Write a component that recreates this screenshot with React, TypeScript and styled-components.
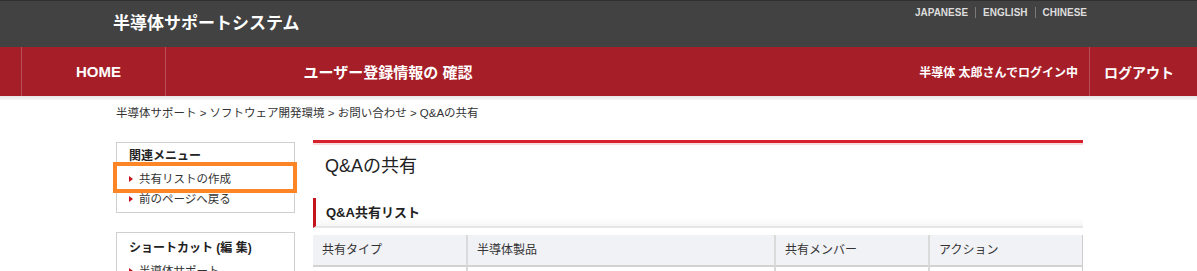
import React from "react";
import styled, { createGlobalStyle } from "styled-components";

const GlobalStyle = createGlobalStyle`
  html, body {
    margin: 0;
    padding: 0;
    overflow: hidden;
    background: #ffffff;
    font-family: "Liberation Sans", "Noto Sans CJK JP", Arial, sans-serif;
    color: #333333;
  }
  * { box-sizing: border-box; }
`;

const TopBar = styled.header`
  height: 47px;
  background: #424242;
  border-top: 1px solid #303030;
  display: flex;
  justify-content: space-between;
  align-items: flex-start;
  padding: 0 110px 0 113px;
`;

const SiteTitle = styled.div`
  font-size: 17px;
  font-weight: bold;
  color: #ffffff;
  line-height: 45px;
`;

const LangList = styled.nav`
  display: flex;
  margin-top: 6px;
`;

const LangLink = styled.a<{ $first?: boolean; $last?: boolean }>`
  font-size: 10px;
  font-weight: bold;
  color: #dddddd;
  line-height: 11px;
  padding: 0 ${(p) => (p.$last ? "0" : "7px")} 0 ${(p) => (p.$first ? "0" : "7px")};
  border-left: ${(p) => (p.$first ? "none" : "1px solid #7a7a7a")};
  text-decoration: none;
`;

const NavBar = styled.nav`
  height: 49px;
  background: #a61e27;
  display: flex;
  align-items: stretch;
  padding-left: 21px;
`;

const NavItem = styled.a<{ $width: number; $shift?: number; $left?: boolean; $right?: boolean }>`
  width: ${(p) => p.$width}px;
  display: flex;
  align-items: center;
  justify-content: center;
  padding-left: ${(p) => p.$shift ?? 0}px;
  color: #ffffff;
  font-size: 15px;
  font-weight: bold;
  text-decoration: none;
  border-left: ${(p) => (p.$left ? "1px solid rgba(255,255,255,0.22)" : "none")};
  border-right: ${(p) => (p.$right ? "1px solid rgba(255,255,255,0.22)" : "none")};
`;

const NavSpacer = styled.div`
  flex: 1;
`;

const LoginInfo = styled.div`
  display: flex;
  align-items: center;
  color: #ffffff;
  font-size: 12px;
  font-weight: bold;
  padding-right: 11px;
`;

const LogoutItem = styled.a`
  display: flex;
  align-items: center;
  color: #ffffff;
  font-size: 14px;
  font-weight: bold;
  padding: 0 23px 0 14px;
  border-left: 1px solid rgba(255,255,255,0.22);
  text-decoration: none;
`;

const NavShadow = styled.div`
  height: 4px;
  background: linear-gradient(#e6e6e6, #f7f7f7);
`;

const Container = styled.main`
  width: 967px;
  margin-left: 116px;
`;

const Breadcrumb = styled.div`
  font-size: 11.5px;
  line-height: 18px;
  margin-top: 4px;
  color: #333333;
`;

const Columns = styled.div`
  display: flex;
  gap: 18px;
  margin-top: 18px;
  align-items: flex-start;
`;

const Sidebar = styled.aside`
  width: 179px;
  margin-top: 2px;
  display: flex;
  flex-direction: column;
  gap: 19px;
`;

const SideBox = styled.section<{ $padTop: number }>`
  position: relative;
  border: 1px solid #cfcfcf;
  padding: ${(p) => p.$padTop}px 0 3px;
`;

const SideTitle = styled.h3`
  margin: 0 0 4px;
  padding-left: 12px;
  font-size: 12px;
  font-weight: bold;
  line-height: 18px;
  color: #222222;
`;

const SideList = styled.ul`
  list-style: none;
  margin: 0;
  padding: 0;
`;

const SideItem = styled.li`
  position: relative;
  padding-left: 22px;
  font-size: 11.5px;
  line-height: 20px;
  color: #333333;
  &::before {
    content: "";
    position: absolute;
    left: 12px;
    top: 7px;
    border-left: 4px solid #c4111b;
    border-top: 3px solid transparent;
    border-bottom: 3px solid transparent;
  }
`;

const Highlight = styled.div`
  position: absolute;
  left: -4px;
  top: 19px;
  width: 184px;
  height: 31px;
  border: 4px solid #fd8526;
  pointer-events: none;
`;

const Panel = styled.section`
  flex: 1;
  border-top: 3px solid #d7212d;
  box-shadow: inset 0 2px 0 #f8dcdc;
`;

const PageTitle = styled.h1`
  margin: 0;
  padding: 9px 0 0 12px;
  font-size: 18px;
  font-weight: normal;
  line-height: 28px;
  color: #222222;
`;

const SectionHeading = styled.h2`
  margin: 18px 0 0;
  height: 30px;
  padding-left: 10px;
  font-size: 13px;
  font-weight: bold;
  line-height: 29px;
  color: #222222;
  border-left: 3px solid #c4141b;
  border-bottom: 2px solid #e6e6e6;
  background: linear-gradient(#ffffff 70%, #f6f6f6);
`;

const Table = styled.div`
  margin-top: 7px;
  display: grid;
  grid-template-columns: 153px 308px 154px 155px;
`;

const HeadCell = styled.div<{ $first?: boolean; $last?: boolean }>`
  height: 32px;
  background: #f1f2f6;
  border-bottom: 2px solid #d2d2d2;
  border-left: ${(p) => (p.$first ? "none" : "2px solid #dadada")};
  border-right: ${(p) => (p.$last ? "1px solid #cccccc" : "none")};
  padding-left: 9px;
  font-size: 12px;
  line-height: 31px;
  color: #333333;
`;

const BodyCell = styled.div<{ $first?: boolean; $last?: boolean }>`
  height: 30px;
  border-left: ${(p) => (p.$first ? "none" : "2px solid #dadada")};
  border-right: ${(p) => (p.$last ? "1px solid #cccccc" : "none")};
  border-bottom: 1px solid #dddddd;
`;

const columns = ["共有タイプ", "半導体製品", "共有メンバー", "アクション"];

export default function App() {
  return (
    <>
      <GlobalStyle />
      <TopBar>
        <SiteTitle>半導体サポートシステム</SiteTitle>
        <LangList>
          <LangLink $first>JAPANESE</LangLink>
          <LangLink>ENGLISH</LangLink>
          <LangLink $last>CHINESE</LangLink>
        </LangList>
      </TopBar>
      <NavBar>
        <NavItem $width={145} $shift={10} $left $right>HOME</NavItem>
        <NavItem $width={444}>ユーザー登録情報の 確認</NavItem>
        <NavSpacer />
        <LoginInfo>半導体 太郎さんでログイン中</LoginInfo>
        <LogoutItem>ログアウト</LogoutItem>
      </NavBar>
      <NavShadow />
      <Container>
        <Breadcrumb>
          半導体サポート &gt; ソフトウェア開発環境 &gt; お問い合わせ &gt; Q&amp;Aの共有
        </Breadcrumb>
        <Columns>
          <Sidebar>
            <SideBox $padTop={4}>
              <SideTitle>関連メニュー</SideTitle>
              <SideList>
                <SideItem>共有リストの作成</SideItem>
                <SideItem>前のページへ戻る</SideItem>
              </SideList>
              <Highlight />
            </SideBox>
            <SideBox $padTop={6}>
              <SideTitle>ショートカット (編 集)</SideTitle>
              <SideList>
                <SideItem>半導体サポート</SideItem>
                <SideItem>ソフトウェア開発環境</SideItem>
              </SideList>
            </SideBox>
          </Sidebar>
          <Panel>
            <PageTitle>Q&amp;Aの共有</PageTitle>
            <SectionHeading>Q&amp;A共有リスト</SectionHeading>
            <Table>
              {columns.map((c, i) => (
                <HeadCell key={c} $first={i === 0} $last={i === columns.length - 1}>
                  {c}
                </HeadCell>
              ))}
              {columns.map((c, i) => (
                <BodyCell key={"b" + c} $first={i === 0} $last={i === columns.length - 1} />
              ))}
            </Table>
          </Panel>
        </Columns>
      </Container>
    </>
  );
}
